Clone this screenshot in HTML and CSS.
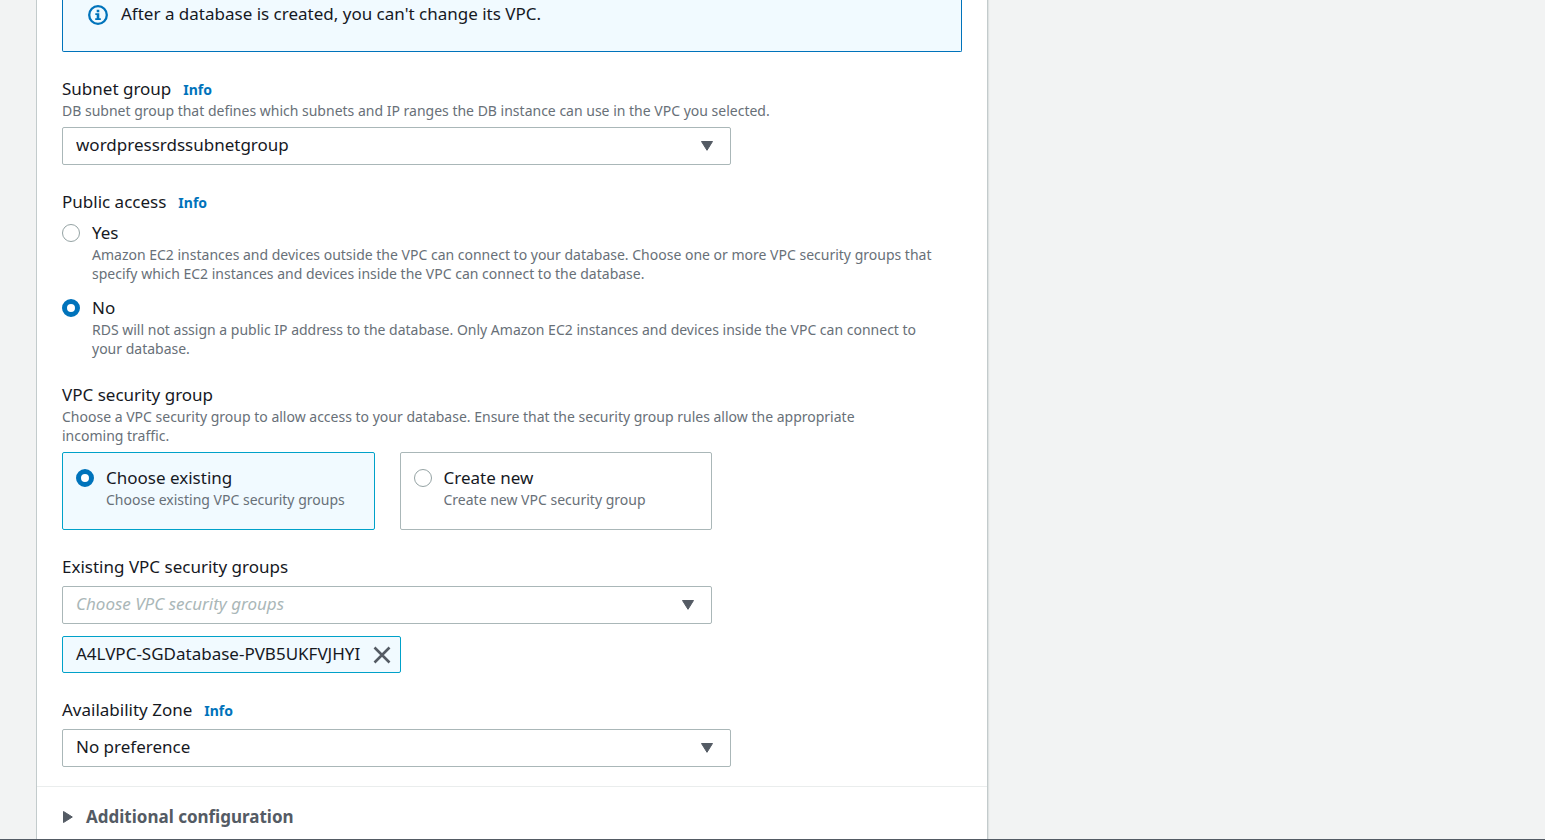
FILE: index.html
```html
<!DOCTYPE html>
<html lang="en">
<head>
<meta charset="utf-8">
<meta name="viewport" content="width=device-width, initial-scale=1">
<title>Create database - Connectivity</title>
<link rel="stylesheet" href="styles.css">
</head>
<body>
<main class="page">
  <form class="panel">
    <div class="panel-body">
      <div class="alert" role="note">
        <svg class="alert-icon" viewBox="0 0 20 20" aria-hidden="true">
          <circle cx="10" cy="10" r="8.8" fill="none" stroke="currentColor" stroke-width="2.3"/>
          <path d="M8.7 4.8h2.6v2.4H8.7zM7.3 8.3h4v5h1.5v1.8H7.2v-1.8h1.5v-3.3H7.3z" fill="currentColor"/>
        </svg>
        <p class="text">After a database is created, you can't change its VPC.</p>
      </div>

      <section class="field">
        <div class="label-row">
          <label class="text" for="subnet">Subnet group</label>
          <a class="info" href="#subnet">Info</a>
        </div>
        <p class="hint">DB subnet group that defines which subnets and IP ranges the DB instance can use in the VPC you selected.</p>
        <div class="select">
          <select id="subnet"><option>wordpressrdssubnetgroup</option></select>
          <svg class="caret" viewBox="0 0 14 12" aria-hidden="true"><path d="M1.5 1.5h11L7 10.3z"/></svg>
        </div>
      </section>

      <section class="field" role="radiogroup" aria-labelledby="access-label">
        <div class="label-row">
          <span class="text" id="access-label">Public access</span>
          <a class="info" href="#access-yes">Info</a>
        </div>
        <div class="choices">
          <div class="choice">
            <input type="radio" name="access" id="access-yes">
            <label for="access-yes">
              <span class="text">Yes</span>
              <span class="hint hint-narrow">Amazon EC2 instances and devices outside the VPC can connect to your database. Choose one or more VPC security groups that specify which EC2 instances and devices inside the VPC can connect to the database.</span>
            </label>
          </div>
          <div class="choice">
            <input type="radio" name="access" id="access-no" checked>
            <label for="access-no">
              <span class="text">No</span>
              <span class="hint hint-narrow">RDS will not assign a public IP address to the database. Only Amazon EC2 instances and devices inside the VPC can connect to your database.</span>
            </label>
          </div>
        </div>
      </section>

      <section class="field" role="radiogroup" aria-labelledby="group-label">
        <span class="text" id="group-label">VPC security group</span>
        <p class="hint hint-narrow">Choose a VPC security group to allow access to your database. Ensure that the security group rules allow the appropriate incoming traffic.</p>
        <div class="tiles">
          <div class="choice tile">
            <input type="radio" name="group" id="group-existing" checked>
            <label for="group-existing">
              <span class="text">Choose existing</span>
              <span class="hint">Choose existing VPC security groups</span>
            </label>
          </div>
          <div class="choice tile">
            <input type="radio" name="group" id="group-new">
            <label for="group-new">
              <span class="text">Create new</span>
              <span class="hint">Create new VPC security group</span>
            </label>
          </div>
        </div>
      </section>

      <section class="field">
        <label class="text" for="groups">Existing VPC security groups</label>
        <div class="select select-short">
          <select id="groups" class="placeholder"><option>Choose VPC security groups</option></select>
          <svg class="caret" viewBox="0 0 14 12" aria-hidden="true"><path d="M1.5 1.5h11L7 10.3z"/></svg>
        </div>
        <div class="token">
          <span class="text">A4LVPC-SGDatabase-PVB5UKFVJHYI</span>
          <button type="button" class="remove" aria-label="Remove A4LVPC-SGDatabase-PVB5UKFVJHYI">
            <svg viewBox="0 0 18 18" aria-hidden="true"><path d="M1.5 1.5l15 15M16.5 1.5l-15 15"/></svg>
          </button>
        </div>
      </section>

      <section class="field">
        <div class="label-row">
          <label class="text" for="zone">Availability Zone</label>
          <a class="info" href="#zone">Info</a>
        </div>
        <div class="select">
          <select id="zone"><option>No preference</option></select>
          <svg class="caret" viewBox="0 0 14 12" aria-hidden="true"><path d="M1.5 1.5h11L7 10.3z"/></svg>
        </div>
      </section>
    </div>

    <button type="button" class="expander" aria-expanded="false">
      <svg viewBox="0 0 12 14" aria-hidden="true"><path d="M1.5 1.5v11L10.3 7z"/></svg>
      Additional configuration
    </button>
  </form>
</main>
</body>
</html>
```
FILE: styles.css
```css
* {
  box-sizing: border-box;
}

body {
  margin: 0;
  background: #f2f3f3;
  color: #16191f;
  font-family: "Noto Sans", "Open Sans", sans-serif;
  font-size: 17px;
  line-height: 24px;
}

p {
  margin: 0;
}

.page {
  display: flex;
  height: 100vh;
  padding: 0 36px;
  overflow: hidden;
  border-bottom: 1px solid #545b64;
}

.panel {
  flex: 0 1 952px;
  align-self: flex-start;
  min-height: 100%;
  background: #fff;
  border: solid #c3cbcc;
  border-width: 0 1px;
  box-shadow: 1px 0 1px #dfe3e3;
}

.panel-body {
  display: flex;
  flex-direction: column;
  gap: 25px;
  padding: 0 25px 19px;
}

.alert {
  display: flex;
  gap: 13px;
  padding: 2px 25px 25px;
  background: #f1faff;
  border: 1px solid #0073bb;
  border-top: 0;
  border-radius: 0 0 2px 2px;
}

.alert-icon {
  flex: none;
  width: 20px;
  height: 20px;
  margin-top: 3px;
  color: #0073bb;
}

.text {
  display: block;
  font-size: 17px;
  line-height: 24px;
}

.hint {
  display: block;
  color: #687078;
  font-size: 14px;
  line-height: 19px;
}

.hint-narrow {
  max-width: 850px;
}

.label-row {
  display: flex;
  align-items: baseline;
  gap: 12px;
  height: 24px;
}

.info {
  color: #0073bb;
  font-size: 14px;
  font-weight: 700;
  line-height: 24px;
  text-decoration: none;
}

.select {
  display: grid;
  grid-template-columns: 1fr 14px 17px;
  align-items: center;
  max-width: 669px;
  margin-top: 7px;
}

.select-short {
  max-width: 650px;
}

.select select {
  grid-area: 1 / 1 / 2 / 4;
  width: 100%;
  height: 38px;
  padding: 0 40px 2px 13px;
  appearance: none;
  background: #fff;
  border: 1px solid #aab7b8;
  border-radius: 2px;
  color: #16191f;
  font: inherit;
}

.select .placeholder {
  color: #aab7b8;
  font-style: italic;
}

.caret {
  grid-area: 1 / 2;
  width: 14px;
  height: 12px;
  pointer-events: none;
}

.caret path,
.expander path {
  fill: #545b64;
  stroke: #545b64;
  stroke-linejoin: round;
}

.choices {
  display: grid;
  gap: 13px;
  margin-top: 7px;
}

.choice {
  display: flex;
  gap: 12px;
}

.choice label {
  flex: 1;
}

input[type="radio"] {
  flex: none;
  width: 18px;
  height: 18px;
  margin: 3px 0;
  appearance: none;
  background: #fff;
  border: 1px solid #95a3a4;
  border-radius: 50%;
}

input[type="radio"]:checked {
  border: 5px solid #0073bb;
}

.tiles {
  display: grid;
  grid-template-columns: 1fr 1fr;
  gap: 25px;
  max-width: 650px;
  margin-top: 7px;
}

.tile {
  min-height: 78px;
  padding: 13px;
  border: 1px solid #aab7b8;
  border-radius: 2px;
}

.tile:has(input:checked) {
  background: #f1faff;
  border-color: #00a1c9;
}

.token {
  display: flex;
  align-items: center;
  gap: 13px;
  width: fit-content;
  height: 37px;
  margin-top: 12px;
  padding: 0 9px 0 13px;
  background: #f1faff;
  border: 1px solid #00a1c9;
  border-radius: 2px;
}

.token .text {
  padding-bottom: 2px;
}

.remove {
  display: flex;
  padding: 0;
  background: none;
  border: 0;
}

.remove svg {
  width: 18px;
  height: 18px;
  fill: none;
  stroke: #545b64;
  stroke-width: 2.6;
}

.expander {
  display: flex;
  align-items: center;
  gap: 12px;
  width: 100%;
  padding: 18px 25px;
  background: none;
  border: 0;
  border-top: 1px solid #eaeded;
  color: #545b64;
  font: inherit;
  font-weight: 700;
}

.expander svg {
  width: 12px;
  height: 14px;
}
```
